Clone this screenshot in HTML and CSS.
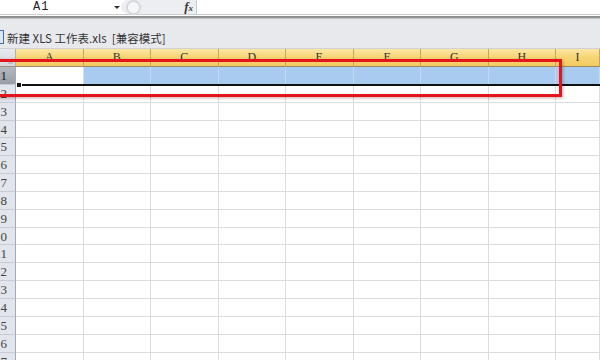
FILE: index.html
```html
<!DOCTYPE html>
<html lang="zh-CN">
<head>
    <meta charset="UTF-8">
    <meta name="viewport" content="width=device-width, initial-scale=1.0">
    <title>新建 XLS 工作表.xls</title>
    <link rel="stylesheet" href="styles.css">
</head>
<body>
    <div class="formula-bar">
        <div class="name-box">
            <span class="cell-ref">A1</span>
            <span class="drop"></span>
        </div>
        <div class="fx-box">
            <span class="round-btn"></span>
            <span class="fx">f<small>x</small></span>
        </div>
        <div class="formula-input"></div>
    </div>
    <div class="bar-sep"></div>

    <div class="title-bar">
        <span class="doc-icon"></span>
        <span class="doc-name">新建 XLS 工作表.xls&nbsp;&nbsp;[兼容模式]</span>
    </div>

    <div class="sheet" id="sheet"></div>

    <div class="selection"><span class="handle"></span></div>
    <div class="mark"></div>

    <script>
        var cols = ["A", "B", "C", "D", "E", "F", "G", "H", "I"];
        var sheet = document.getElementById("sheet");
        var html = '<div class="corner"></div>';

        cols.forEach(function (c) {
            html += '<div class="col-head">' + c + '</div>';
        });

        for (var r = 1; r <= 17; r++) {
            html += '<div class="row-head' + (r === 1 ? ' active' : '') + '"><span>' + r + '</span></div>';
            cols.forEach(function (c) {
                var cls = "cell";
                if (r === 1) cls += (c === "A") ? " current" : " picked";
                html += '<div class="' + cls + '"></div>';
            });
        }
        sheet.innerHTML = html;
    </script>
</body>
</html>
```

FILE: styles.css
```css
body {
    margin: 0;
    width: 600px;
    height: 360px;
    overflow: hidden;
    position: relative;
    background: #fff;
    font-family: "Liberation Serif", serif;
}

/* formula bar */
.formula-bar {
    display: flex;
    height: 14px;
    background: #fff;
}
.name-box {
    width: 121px;
    position: relative;
}
.cell-ref {
    position: absolute;
    left: 33px;
    top: 1px;
    font-family: "Liberation Mono", monospace;
    font-size: 12px;
    line-height: 12px;
    letter-spacing: 1px;
    color: #222;
}
.drop {
    position: absolute;
    left: 114px;
    top: 6px;
    border-left: 3px solid transparent;
    border-right: 3px solid transparent;
    border-top: 3px solid #333;
}
.fx-box {
    width: 75px;
    display: flex;
    align-items: center;
    justify-content: space-between;
    background: #eceef1;
    border-right: 1px solid #c9ccd1;
    border-radius: 7px 0 0 7px;
}
.round-btn {
    width: 15px;
    height: 15px;
    margin-left: 5px;
    border-radius: 50%;
    background: #f6f7f8;
    border: 2px solid #d6d9dd;
    box-sizing: border-box;
}
.fx {
    font-style: italic;
    font-weight: bold;
    font-size: 13px;
    line-height: 12px;
    color: #3a3a3a;
    margin-right: 3px;
}
.fx small {
    font-size: 9px;
}
.formula-input {
    flex: 1;
}
.bar-sep {
    height: 6px;
    box-sizing: border-box;
    border-top: 1px solid #cdcdcd;
    background: linear-gradient(#fff 0, #fff 1px, #8f8f8f 1px, #8f8f8f 3px, #c9cacd 3px, #c9cacd 4px, #e2e3e7 4px);
}

/* workbook title */
.title-bar {
    height: 29px;
    display: flex;
    align-items: flex-end;
    padding-bottom: 2px;
    box-sizing: border-box;
    background: #e8e9ed;
    border-bottom: 1px solid #cfd1d5;
    font-family: "Noto Sans CJK SC", sans-serif;
    font-size: 11.5px;
    color: #333;
}
.doc-icon {
    width: 3px;
    height: 12px;
    margin: 0 3px 2px 0;
    border: 1px solid #3d6fb5;
    border-left: none;
    background: #dce8f6;
}
.doc-name {
    line-height: 16px;
}

/* grid */
.sheet {
    display: grid;
    grid-template-columns: 16px repeat(8, 67.5px) 1fr;
    grid-template-rows: 18px;
    grid-auto-rows: 17.85px;
}
.corner {
    background: linear-gradient(#e7e9ed, #d5d8de);
    border-right: 1px solid #a9b0bb;
    border-bottom: 1px solid #9d9178;
    box-sizing: border-box;
    position: relative;
}
.corner::after {
    content: "";
    position: absolute;
    right: 2px;
    bottom: 2px;
    border-left: 6px solid transparent;
    border-bottom: 6px solid #b8bdc5;
}
.col-head {
    background: linear-gradient(#fbe6a6, #f7d677 45%, #f3ca62);
    border-right: 1px solid #c5a75e;
    border-bottom: 1px solid #9c8a64;
    box-sizing: border-box;
    text-align: center;
    font-size: 12px;
    line-height: 17px;
    color: #333;
}
.row-head {
    display: flex;
    justify-content: flex-end;
    background: #e2e5eb;
    border-right: 1px solid #9faabb;
    border-bottom: 1px solid #c6ccd5;
    box-sizing: border-box;
    overflow: hidden;
    padding-right: 8px;
    font-size: 13px;
    line-height: 18px;
    color: #444;
}
.row-head span {
    flex-shrink: 0;
    white-space: nowrap;
}
.row-head.active {
    background: linear-gradient(#b5b9bf, #999ea5);
    color: #222;
}
.cell {
    border-right: 1px solid #dadcdd;
    border-bottom: 1px solid #dadcdd;
    box-sizing: border-box;
}
.cell.picked {
    background: #a8cbef;
    border-right-color: #c2d9f2;
    border-bottom-color: #a8cbef;
}
.cell.current {
    background: #fff;
}

/* selection outline and red annotation lie over the sheet */
.selection {
    position: absolute;
    left: 16px;
    top: 67px;
    right: 0;
    height: 19px;
    border-bottom: 2px solid #111;
    box-sizing: border-box;
}
.handle {
    position: absolute;
    left: 0;
    bottom: -4px;
    width: 6px;
    height: 6px;
    background: #111;
    border: 1px solid #fff;
    box-sizing: border-box;
}
.mark {
    position: absolute;
    left: -10px;
    top: 59px;
    width: 572px;
    height: 38px;
    border: 3px solid #e3141c;
    box-sizing: border-box;
    box-shadow: 1px 1px 3px rgba(120, 0, 0, 0.35);
}
```
